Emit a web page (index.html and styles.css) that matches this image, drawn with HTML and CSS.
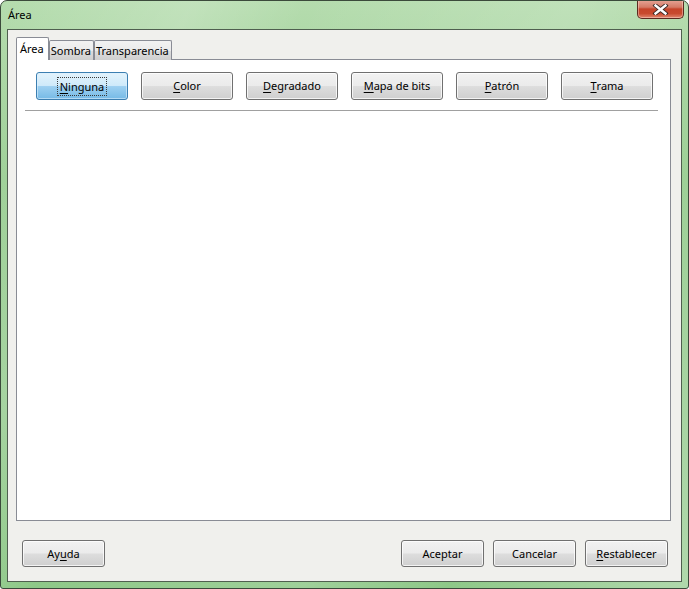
FILE: index.html
```html
<!DOCTYPE html>
<html>
<head>
<meta charset="utf-8">
<link rel="stylesheet" href="styles.css">
</head>
<body>
<div class="window">
  <div class="titlebar">
    <span class="title">Área</span>
    <button class="close" aria-label="Cerrar">
      <svg width="17" height="11" viewBox="0 0 17 11">
        <path d="M3.5 1.5 L13.5 9.5 M13.5 1.5 L3.5 9.5" stroke="#3a2a26" stroke-width="4.2" stroke-linecap="square"/>
        <path d="M3.5 1.5 L13.5 9.5 M13.5 1.5 L3.5 9.5" stroke="#ffffff" stroke-width="2.4" stroke-linecap="square"/>
      </svg>
    </button>
  </div>
  <div class="client">
    <div class="tabs">
      <div class="tab active">Área</div>
      <div class="tab">Sombra</div>
      <div class="tab">Transparencia</div>
    </div>
    <div class="panel">
      <div class="fill-row">
        <button class="btn default"><span class="focus"><u>N</u>inguna</span></button>
        <button class="btn"><u>C</u>olor</button>
        <button class="btn"><u>D</u>egradado</button>
        <button class="btn"><u>M</u>apa de bits</button>
        <button class="btn"><u>P</u>atrón</button>
        <button class="btn"><u>T</u>rama</button>
      </div>
      <div class="sep"></div>
    </div>
    <div class="footer">
      <button class="btn small">Ay<u>u</u>da</button>
      <div class="right">
        <button class="btn small">Aceptar</button>
        <button class="btn small">Cancelar</button>
        <button class="btn small"><u>R</u>establecer</button>
      </div>
    </div>
  </div>
</div>
</body>
</html>
```
FILE: styles.css
```css
html, body {
  margin: 0;
  padding: 0;
  background: #ffffff;
}
body {
  font-family: "Noto Sans", "DejaVu Sans", sans-serif;
  font-size: 11px;
  color: #000;
}
.window {
  width: 689px;
  height: 589px;
  box-sizing: border-box;
  border: 1px solid #3b4a3b;
  border-radius: 7px 7px 3px 3px;
  background:
    linear-gradient(115deg, rgba(255,255,255,0) 0%, rgba(255,255,255,0.18) 20%, rgba(255,255,255,0) 32%, rgba(255,255,255,0.15) 60%, rgba(255,255,255,0) 75%, rgba(255,255,255,0.3) 100%),
    linear-gradient(180deg, #b5dcae 0%, #98cd91 30%, #8ec888 100%);
  display: flex;
  flex-direction: column;
  padding: 0 6px 6px 6px;
  overflow: hidden;
}
.titlebar {
  height: 28px;
  display: flex;
  justify-content: space-between;
  align-items: flex-start;
}
.title {
  margin-top: 6px;
  margin-left: 1px;
  font-size: 11px;
  line-height: 16px;
  color: #000;
}
.close {
  width: 47px;
  height: 19px;
  margin-top: -1px;
  margin-right: -2px;
  padding: 0;
  border: 1px solid #5b2a20;
  border-top: none;
  border-radius: 0 0 5px 5px;
  background: linear-gradient(180deg, #e7a596 0%, #d57a66 40%, #c6442a 50%, #c84a2e 75%, #e0876e 100%);
  box-shadow: inset 0 0 0 1px rgba(255,220,210,0.45);
  display: flex;
  align-items: center;
  justify-content: center;
}
.client {
  flex: 1;
  border: 1px solid #4f5f4f;
  background: #f0f0ed;
  display: flex;
  flex-direction: column;
  padding: 8px 10px 14px 8px;
}
.tabs {
  display: flex;
  align-items: flex-end;
  height: 22px;
  position: relative;
  z-index: 1;
  margin-bottom: -1px;
}
.tab {
  height: 20px;
  box-sizing: border-box;
  border: 1px solid #898c95;
  border-bottom: none;
  background: linear-gradient(180deg, #f2f2f2 0%, #ebebeb 50%, #dddddd 51%, #cfcfcf 100%);
  padding: 0 2px 0 1px;
  line-height: 19px;
  margin-right: 1px;
  border-radius: 2px 2px 0 0;
}
.tab + .tab {
  margin-left: -1px;
}
.tab.active {
  height: 23px;
  background: #ffffff;
  padding: 0 4px 0 3px;
  line-height: 21px;
  margin-right: 0;
}
.tab.active + .tab {
  margin-left: 0;
}
.panel {
  flex: 1;
  border: 1px solid #898c95;
  background: #ffffff;
  padding: 12px 17px 0 19px;
}
.fill-row {
  display: flex;
  justify-content: space-between;
}
.btn {
  font-family: "Noto Sans", "DejaVu Sans", sans-serif;
  font-size: 11px;
  color: #000;
  width: 92px;
  height: 28px;
  box-sizing: border-box;
  border: 1px solid #707070;
  border-radius: 3px;
  background: linear-gradient(180deg, #f2f2f2 0%, #ebebeb 48%, #dddddd 52%, #cfcfcf 100%);
  box-shadow: inset 0 0 0 1px rgba(255,255,255,0.75);
  padding: 0;
  line-height: 16px;
  display: flex;
  align-items: center;
  justify-content: center;
}
.btn u {
  text-decoration-thickness: 1px;
  text-underline-offset: 2px;
}
.btn.default {
  border-color: #3c7fb1;
  background: linear-gradient(180deg, #e3f3fc 0%, #cfeafa 48%, #9dd0f1 52%, #76bae6 100%);
  box-shadow: inset 0 0 0 1px rgba(220,240,255,0.6);
}
.focus {
  border: 1px dotted #3a3a3a;
  padding: 1px 2px;
  line-height: 15px;
}
.sep {
  height: 1px;
  background: #a0a0a0;
  margin: 10px -5px 0 -11px;
}
.footer {
  margin-top: 19px;
  display: flex;
  justify-content: space-between;
  padding: 0 3px 0 6px;
}
.footer .right {
  display: flex;
  gap: 9px;
}
.btn.small {
  width: 83px;
  height: 27px;
}
```
